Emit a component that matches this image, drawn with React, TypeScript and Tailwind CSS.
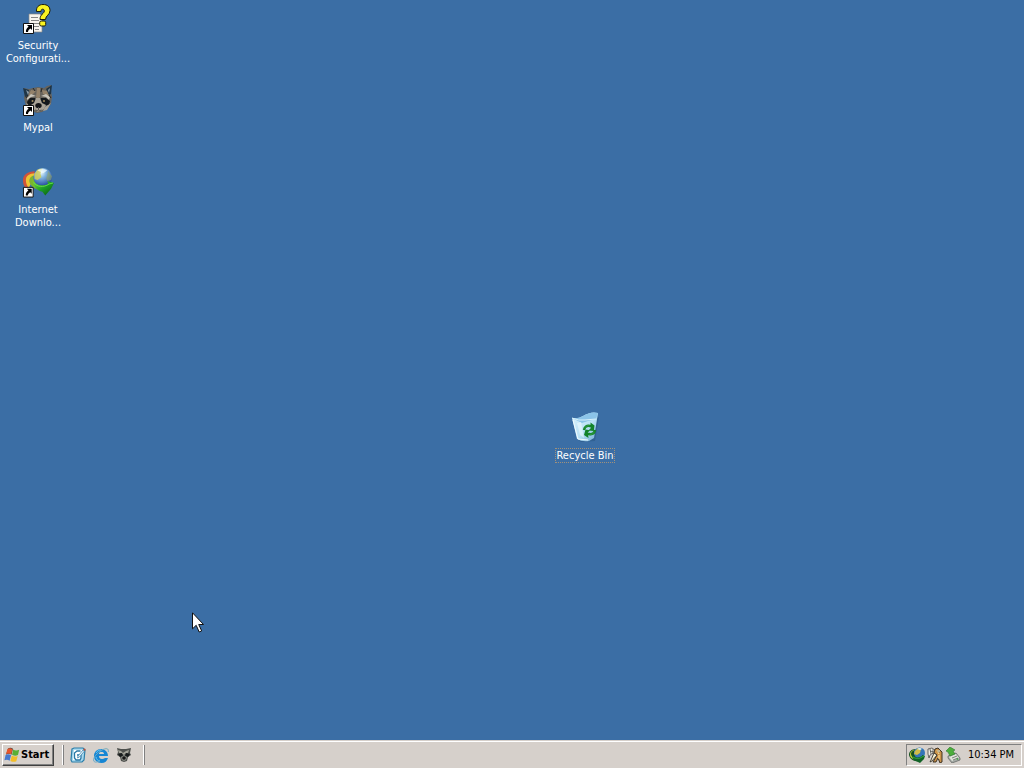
import type { ReactNode } from 'react';

function ShortcutArrow() {
  return (
    <g>
      <path d="M1.500 20.500h10v10h-10z" fill="#fff" stroke="#111" />
      <path d="M5 22h5v5l-1.500-1.500C7 26.500 6 27.500 6 29H4c-.5-2 .7-4 2.600-5.300z" fill="#000" />
    </g>
  );
}

function SecurityIcon() {
  return (
    <svg viewBox="0 0 32 32" className="h-8 w-8" aria-hidden="true">
      <path d="M7 11h11l2 2v16H7z" fill="#f7f4ee" stroke="#8a8a86" strokeWidth=".7" />
      <path d="M9 14.500h7M9 17.500h8M9 20.500h8M12 23.500h5M13 26.500h4" stroke="#858585" strokeWidth="1" />
      <path d="M14.500 8.500C14 4 17 1.500 21 1.500c4.500 0 7 2.200 7 6 0 4.500-4.500 5-4.500 9H18c0-5.500 4.300-5.800 4.300-8.500 0-1.200-.6-1.800-1.700-1.800s-1.600.8-1.600 2.300z" fill="#f9f322" stroke="#1d1c08" strokeWidth="1" />
      <rect x="17.700" y="18" width="6" height="5" rx="1.500" fill="#f9f322" stroke="#1d1c08" strokeWidth="1" />
      <ShortcutArrow />
    </svg>
  );
}

function RaccoonIcon() {
  return (
    <svg viewBox="0 0 32 32" className="h-8 w-8" aria-hidden="true">
      <path d="M2 3l5 1 4-1 5-1 6 1 3-2 4-1 0 6 1 6-1 7-4 5-5 3-5 1-6-2-5-5-2-8 1-5z" fill="#67635c" />
      <path d="M1 3l6 2-1 6-3 1zM30 0l-6 4 3 6 2-1z" fill="#1f3546" />
      <path d="M4 5l3 2-1 3zM28 3l-2 2 1 3z" fill="#8c9ca8" />
      <path d="M15 3l3 0 0 9-2 2-2-2zM9 5l5 1-3 3-5 2zM20 5l5 1 2 5-6-2z" fill="#94826a" />
      <path d="M5 13l4-4 5 2-5 1-4 3zM28 12l-4-3-5 2 5 1 3 3z" fill="#c9c5bb" />
      <path d="M5 17l3-4 5 0 2 3-3 5-6-1zM28 16l-4-3-5 0-2 3 4 5 6-1z" fill="#15191c" />
      <path d="M14 13l4 0 2 5 4 2-2 4-6 3-5-3-2-4 3-2z" fill="#aaa396" />
      <path d="M4 18l5 4 2 4-4-1zM29 18l-6 4-2 4 4-1z" fill="#aaa499" />
      <circle cx="10.500" cy="16" r="1" fill="#a38c60" />
      <circle cx="22" cy="16" r="1" fill="#a38c60" />
      <ellipse cx="16.500" cy="20.500" rx="3.200" ry="2.600" fill="#171719" />
      <path d="M16.500 22v3M13 25l3.500 1 3-1" fill="none" stroke="#555" />
      <path d="M11 3l2 3M20 3l-1 4M6 10l-2 3M27 10l2 3" stroke="#292827" />
      <ShortcutArrow />
    </svg>
  );
}

function DownloadIcon() {
  return (
    <svg viewBox="0 0 33 32" className="h-8 w-8" aria-hidden="true">
      <defs>
        <radialGradient id="globe" cx=".4" cy=".25" r=".8">
          <stop offset="0" stopColor="#f0fcff" />
          <stop offset=".35" stopColor="#83b5df" />
          <stop offset="1" stopColor="#163c95" />
        </radialGradient>
        <linearGradient id="arrow" x1="0" y1="0" x2="1" y2="1">
          <stop offset="0" stopColor="#7ad83c" />
          <stop offset=".5" stopColor="#1b9d25" />
          <stop offset="1" stopColor="#07510c" />
        </linearGradient>
      </defs>
      <path d="M13 4C6 4 1 8 1 13c0 4 1 7 4 9l2-4C4 13 6 8 13 7z" fill="#d0533a" />
      <path d="M14 6C7 6 4 9 4 13c0 3 1 6 3 8l2-4c-2-4-1-7 5-9z" fill="#edc333" />
      <path d="M12 8c-4 2-5 4-4 8 2 4 5 6 9 7l4-4c-6-1-10-4-9-11z" fill="#7cb52f" />
      <circle cx="21.500" cy="10" r="9.500" fill="url(#globe)" />
      <path d="M13 7l3-5 5-1-2 5 1 4-4 3-3-1z" fill="#d2cf59" fillOpacity=".85" />
      <path d="M27 4l4 5-1 4-4 1-1-3 1-3z" fill="#99ab56" fillOpacity=".5" />
      <path d="M16 3q5-3 10 0l-4 3z" fill="#f2fcff" fillOpacity=".75" />
      <path d="M11 14c3 4 9 6 16 3l-1-3 7 2-3 6-6 7-3-4c-5-1-9-5-10-11z" fill="url(#arrow)" />
      <path d="M12 16c4 4 10 5 16 1l4-1" fill="none" stroke="#65d94b" strokeWidth="1" />
      <ShortcutArrow />
    </svg>
  );
}

function DownloadTrayIcon() {
  return (
    <svg viewBox="0 0 16 16" className="h-4 w-4" aria-hidden="true">
      <path d="M7 2C2 2 0 5 0 8c1 4 4 6 8 6l3-4C7 10 5 8 5 5z" fill="#15511e" />
      <path d="M6 3C3 4 2 5 2 7c0 3 4 5 9 3l1 2C7 14 1 12 1 8c0-3 2-5 5-5z" fill="#b8cc37" />
      <circle cx="10.500" cy="6" r="5.500" fill="#3475b8" />
      <path d="M6 4l3-3 3 1-1 4-3 2-3-1z" fill="#d0bc48" />
      <path d="M8 2q3-2 5 0l-2 1z" fill="#d8f0f8" />
      <path d="M3 8c3 3 7 3 10 1v-1l3 1-1 3-4 4-2-1C5 14 3 11 3 8z" fill="#126327" />
      <path d="M4 10c3 2 6 2 9 0l2-1" fill="none" stroke="#35a83b" />
    </svg>
  );
}

function RecycleIcon() {
  return (
    <svg viewBox="0 0 32 32" className="h-8 w-8" aria-hidden="true">
      <defs>
        <linearGradient id="bin" x1="0" y1="0" x2="1" y2="1">
          <stop offset="0" stopColor="#ddf3fc" />
          <stop offset=".55" stopColor="#b9e2f6" />
          <stop offset="1" stopColor="#6fa9d2" />
        </linearGradient>
      </defs>
      <path d="M8 28l4 3 14-1 4-24-2 1z" fill="#244e78" fillOpacity=".4" />
      <path d="M3 7q6 1 11-2 8-5 15-3l-4 25-5 3q-7 1-12-2z" fill="url(#bin)" />
      <path d="M3 7q6 1 11-2 8-5 15-3l-2 6-8 2-6 2z" fill="#8bc4e9" />
      <path d="M3 7q7 3 13 2l11-1" fill="none" stroke="#d9f2fc" strokeWidth="1" />
      <path d="M4 9l5 19 10 1" fill="none" stroke="#f0fbff" strokeWidth="1" />
      <path d="M8 12l3 12 4 3-3-16z" fill="#f0fbff" fillOpacity=".55" />
      <path d="M15 19q1-5 6-4h2" fill="none" stroke="#12832a" strokeWidth="2.500" />
      <path d="M21.500 11.500l4 3-.7 5.500-5.300-.5 2.200-2.300z" fill="#12832a" />
      <path d="M26 19q-1 5-6 4h-2" fill="none" stroke="#12832a" strokeWidth="2.500" />
      <path d="M19.500 27l-4.500-3 1.500-5.500 4.500.7-2.200 2.300z" fill="#12832a" />
      <path d="M15.500 17q2-3 5-2.300M25.500 21q-2 3-5 2.400" fill="none" stroke="#41ae4a" strokeWidth=".7" />
    </svg>
  );
}

function DesktopItem({ icon, label }: { icon: ReactNode; label: string[] }) {
  return (
    <button type="button" className="flex h-[82px] w-[76px] flex-col items-center gap-1 text-center leading-[13px] text-white">
      {icon}
      <span className="block">{label.map((line) => <span key={line} className="block">{line}</span>)}</span>
    </button>
  );
}

function WindowsFlag() {
  return (
    <svg viewBox="0 0 16 16" className="h-4 w-4" aria-hidden="true">
      <path d="M4 1.500c1.500-1.200 3.500-1 5 .2l-1.500 6c-1.800-1.200-3.500-1.200-5.500 0z" fill="#4a4944" />
      <path d="M3.500 2c1.500-1 3.500-1 5 .2L7.200 7.300c-1.700-1-3.300-1-5.200-.2z" fill="#e8552c" />
      <path d="M9.200 2.500c2 1.200 3.500 1.200 6 .2L14 8c-2.200 1-3.800.8-5.900-.3z" fill="#5aaf35" />
      <path d="M1.600 8c1.800-1 3.500-1 5.500.2l-1.500 5.500c-1.700-1.200-3.400-1.200-5.200-.4z" fill="#4679cf" />
      <path d="M7.800 8.500c1.800 1.200 3.500 1.300 5.900.4l-1.400 5.300c-2 1-3.800.8-5.900-.3z" fill="#f2bd28" />
    </svg>
  );
}

function ShowDesktopIcon() {
  return (
    <svg viewBox="0 0 16 16" className="h-4 w-4" aria-hidden="true">
      <path d="M2 2l2-1h9l2 2-1 10-2 2H2l-1-2z" fill="#a7d9ef" stroke="#2b7da8" strokeWidth="1.200" />
      <path d="M4 3h8l-1 10H3z" fill="#fff" />
      <path d="M10.500 4H7L4.500 6v5L6 13h4l1-2V8H7" fill="none" stroke="#2878a6" strokeWidth="1.300" />
      <path d="M8 9l5-6 1.500 1-5 6-2 1z" fill="#e4f3fa" stroke="#347ba5" strokeWidth=".7" />
      <path d="M13 2l2-.5.7 1.500-1.200 1z" fill="#b9503b" />
    </svg>
  );
}

function ExplorerIcon() {
  return (
    <svg viewBox="0 0 16 16" className="h-4 w-4" aria-hidden="true">
      <path fillRule="evenodd" d="M15 9H6c0 2 1 3 3 3 1 0 2-.5 3-1h3c-1 3-3 5-6.500 5C4 16 1 13 1 9s3-7 7-7 7 3 7 7zM6 7h5c0-1.500-1-2-2.500-2S6 5.500 6 7z" fill="#1686d4" />
      <path d="M3 6c1-2 3-3 5-3M3 10c0 2 2 4 4 4" fill="none" stroke="#66c7f2" />
      <path d="M15.300 5c.7-4-2.300-4-6.300-2C4 6-.5 11 .8 14c1 2 4 1 6-.5" fill="none" stroke="#6daac6" strokeWidth="1" />
      <path d="M12 1.500c2-.4 3 .3 3 2" fill="none" stroke="#9cb7ae" strokeWidth=".6" />
    </svg>
  );
}

function SmallRaccoonIcon() {
  return (
    <svg viewBox="0 0 16 16" className="h-4 w-4" aria-hidden="true">
      <path d="M1 1l4 1h5l5-1-1 5 1 2-3 2-1 4-3 1-3-1-1-4-3-2 1-3z" fill="#4e504d" />
      <path d="M2 3l3 1 2 2 3-2 3-1-1 3-2 0-2 2-3-2-2 0z" fill="#a3a399" />
      <path d="M2 7l4-1 1 3-3 1zM14 7l-4-1-1 3 3 1z" fill="#171b1c" />
      <path d="M5 10l3-2 3 2-1 3-2 1-2-1z" fill="#8a8d86" />
      <circle cx="8" cy="11" r="1.800" fill="#161616" />
    </svg>
  );
}

function KeyTrayIcon() {
  return (
    <svg viewBox="0 0 16 16" className="h-4 w-4" aria-hidden="true">
      <path d="M1 2l4-1 4 3 1 4-4-2-3 2-1 3-1-4z" fill="#eeece4" stroke="#333" strokeWidth=".7" />
      <path d="M8 2l3-1 4 4v10l-2 1-2-5-2 4-3 0 4-7-3-2z" fill="#cb934a" stroke="#30261a" strokeWidth=".9" />
      <path d="M7 6l3 2-5 6-2 1 1-2z" fill="#f5edcf" stroke="#292721" strokeWidth=".8" />
      <path d="M10 3l2 4M12 8v4" fill="none" stroke="#ffe9a5" />
      <path d="M3 4l4 1M6 2v5M3 2l1 5" stroke="#51514b" strokeWidth=".8" />
      <circle cx="12" cy="4" r="1.200" fill="#fff5cf" stroke="#33251a" strokeWidth=".4" />
    </svg>
  );
}

function EjectIcon() {
  return (
    <svg viewBox="0 0 16 16" className="h-4 w-4" aria-hidden="true">
      <path d="M3 9l8-3 4 5v2l-8 3-4-5z" fill="#a5aaa6" stroke="#5c625e" strokeWidth=".7" />
      <path d="M4 10l7-3 3 4-7 3z" fill="#e1e5dc" />
      <path d="M7 11l5-2M8 13l5-2" stroke="#62685f" strokeWidth=".8" />
      <path d="M1 4l4-4 5 3-2 1 2 3-5 2-2-4z" fill="#4cae3b" stroke="#2d7a2f" strokeWidth=".6" />
      <circle cx="12.500" cy="12" r=".8" fill="#2ca832" />
    </svg>
  );
}

function Divider() {
  return <span className="block h-5 w-[2px] border-r border-l border-r-[#808080] border-l-white" />;
}

export default function App() {
  return (
    <div className="flex min-h-screen flex-col bg-[#3b6ea5] font-['DejaVu_Sans_Condensed','DejaVu_Sans',sans-serif] text-[11px] select-none">
      <main className="relative flex-1 overflow-hidden">
        <div className="flex w-fit flex-col pt-[3px]">
          <DesktopItem icon={<SecurityIcon />} label={['Security', 'Configurati...']} />
          <DesktopItem icon={<RaccoonIcon />} label={['Mypal']} />
          <DesktopItem icon={<DownloadIcon />} label={['Internet', 'Downlo...']} />
        </div>
        <button type="button" className="absolute top-[411px] left-[547px] flex w-[76px] flex-col items-center gap-[5px] text-white">
          <RecycleIcon />
          <span className="border border-dotted border-[#9f917c] leading-[13px] whitespace-nowrap">Recycle Bin</span>
        </button>
        <svg viewBox="0 0 12 21" className="absolute top-[612px] left-[192px] h-[21px] w-3" aria-hidden="true">
          <path d="M.5.8v16l3.700-3.500 3 6.700 2.500-1.100-3-6.400h4.800z" fill="#fff" stroke="#111" />
        </svg>
      </main>

      <footer className="flex h-7 items-center border-t border-[#d6d0cb] bg-[#d6d0cb] px-[2px] pt-px text-black shadow-[inset_0_1px_0_white]">
        <button type="button" className="flex h-[22px] w-[52px] items-center gap-px border border-t-white border-r-[#404040] border-b-[#404040] border-l-white pl-px font-bold shadow-[inset_-1px_-1px_0_#808080]">
          <WindowsFlag />
          <span>Start</span>
        </button>
        <nav className="ml-2 flex items-center" aria-label="Quick launch">
          <Divider />
          <div className="flex gap-[7px] pr-[11px] pl-[6px]">
            <button type="button" aria-label="Show Desktop"><ShowDesktopIcon /></button>
            <button type="button" aria-label="Internet Explorer"><ExplorerIcon /></button>
            <button type="button" aria-label="Mypal"><SmallRaccoonIcon /></button>
          </div>
          <Divider />
        </nav>
        <div className="ml-auto flex h-[22px] w-[116px] items-center gap-[2px] border border-t-[#808080] border-r-white border-b-white border-l-[#808080] pr-[2px] pl-[2px]">
          <button type="button" aria-label="Internet Download Manager"><DownloadTrayIcon /></button>
          <button type="button" aria-label="Security"><KeyTrayIcon /></button>
          <button type="button" aria-label="Safely Remove Hardware"><EjectIcon /></button>
          <time className="flex-1 text-center whitespace-nowrap">10:34 PM</time>
        </div>
      </footer>
    </div>
  );
}
